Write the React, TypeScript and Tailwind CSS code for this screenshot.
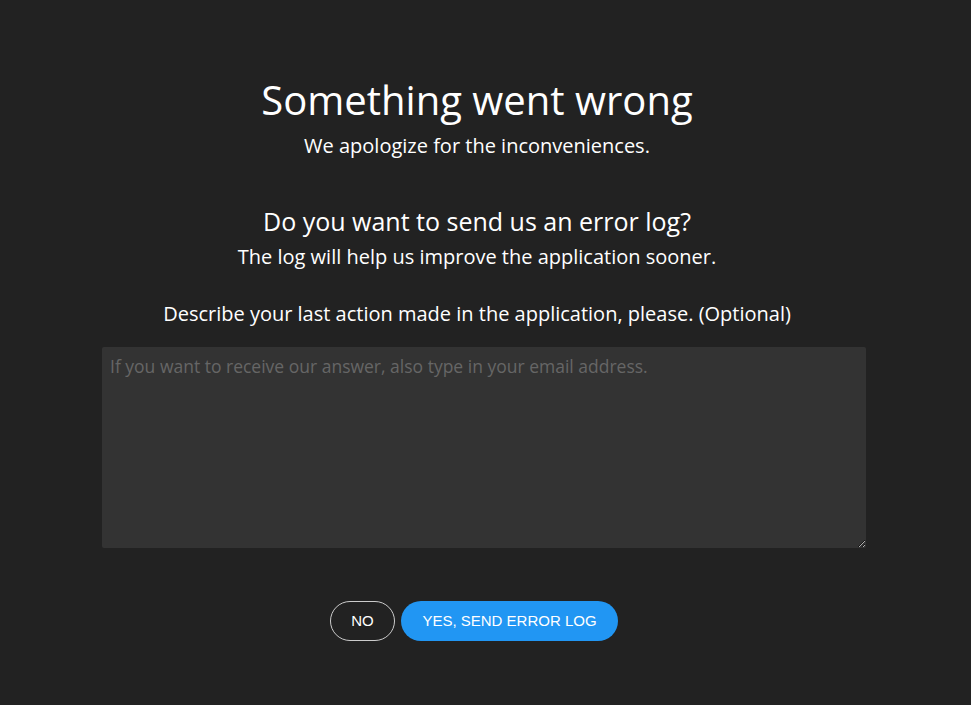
export default function App() {
  return (
    <div
      className="min-h-screen w-full bg-[#222222] text-white flex flex-col pr-[17px]"
      style={{ fontFamily: '"Open Sans", sans-serif' }}
    >
      <div className="flex flex-col items-center">
        <h1 className="mt-[73px] text-[40px] leading-[54px] font-normal">Something went wrong</h1>
        <p className="mt-[6px] text-[20px] leading-[26px] font-medium">We apologize for the inconveniences.</p>

        <h2 className="mt-[45px] text-[25px] leading-[34px] font-normal">Do you want to send us an error log?</h2>
        <p className="mt-[6px] text-[20px] leading-[26px] font-medium">
          The log will help us improve the application sooner.
        </p>

        <p className="mt-[31px] text-[20px] leading-[26px] font-medium">
          Describe your last action made in the application, please. (Optional)
        </p>
      </div>

      <textarea
        className="mt-[20px] ml-[102px] w-[764px] h-[201px] bg-[#333333] rounded-[2px] px-[8px] py-[7px] text-[17.5px] leading-[24px] text-white placeholder:text-[#666666] outline-none"
        placeholder="If you want to receive our answer, also type in your email address."
      />

      <div
        className="mt-[53px] ml-[330px] flex gap-[6px]"
        style={{ fontFamily: '"Liberation Sans", Arial, sans-serif' }}
      >
        <button className="h-[40px] w-[65px] rounded-full border border-[#cccccc] text-[15px] text-white">
          NO
        </button>
        <button className="h-[40px] w-[217px] rounded-full bg-[#2196f3] text-[15px] text-white">
          YES, SEND ERROR LOG
        </button>
      </div>
    </div>
  )
}
